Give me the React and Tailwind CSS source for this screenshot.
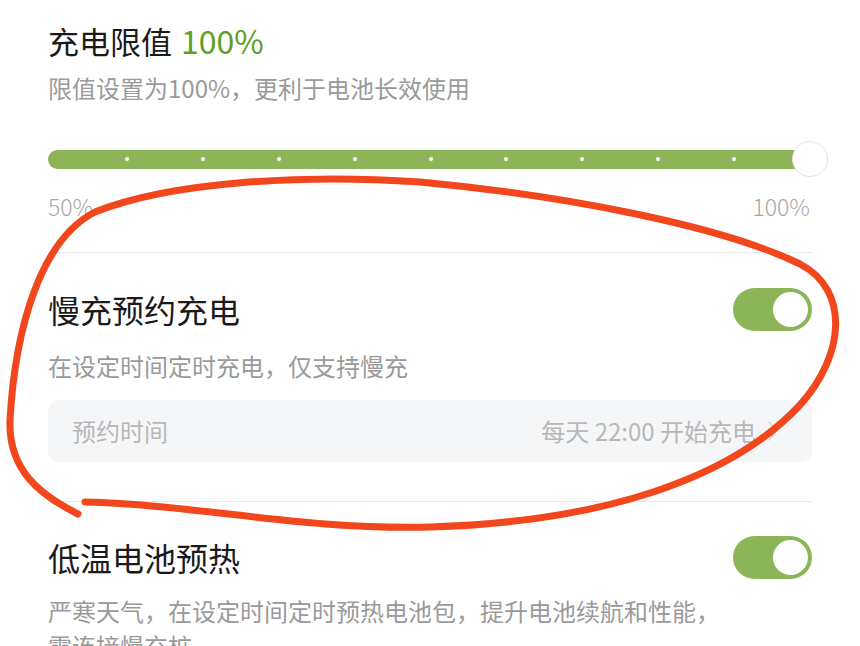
import React from "react";

const font = { fontFamily: '"Noto Sans CJK SC", "Noto Sans", sans-serif' };

const Toggle = () => (
  <div className="w-[79px] h-[43px] rounded-full bg-[#8bb557] flex items-center justify-end pr-[4px]">
    <div className="w-[35px] h-[35px] rounded-full bg-white" />
  </div>
);

const Chevron = () => (
  <svg width="14" height="24" viewBox="0 0 14 24" fill="none" className="ml-[10px]">
    <path d="M3 3 L11 12 L3 21" stroke="#d6d6d6" strokeWidth="1.6" strokeLinecap="round" strokeLinejoin="round" />
  </svg>
);

const ticks = [1, 2, 3, 4, 5, 6, 7, 8, 9];

export default function App() {
  return (
    <div className="relative w-[860px] h-[646px] overflow-hidden bg-white" style={font}>
      <div className="px-[48px]">
        {/* 充电限值 */}
        <div className="pt-[18px] h-[62px] flex items-center text-[31px] text-[#1a1a1a] leading-none">
          充电限值<span className="ml-[9px] text-[32px] text-[#5f9e24]">100%</span>
        </div>
        <div className="mt-[10px] h-[32px] flex items-center text-[24px] text-[#9a9a9a]">
          限值设置为100%，更利于电池长效使用
        </div>

        <div className="mt-[37px] h-[36px] relative flex items-center">
          <div className="w-full h-[19px] rounded-full bg-[#8bb557] flex items-center justify-between pl-[77px] pr-[76px]">
            {ticks.map((t) => (
              <div key={t} className="w-[4px] h-[4px] rounded-full bg-white" />
            ))}
          </div>
          <div className="absolute right-[-16px] top-0 w-[36px] h-[36px] rounded-full bg-white border border-[#e2e2e2]" />
        </div>

        <div className="mt-[14px] h-[30px] flex items-center justify-between text-[23px] font-light text-[#a8a8a8]">
          <span>50%</span>
          <span className="mr-[2px]">100%</span>
        </div>

        <div className="mt-[31px] h-px bg-[#e8e8e8]" />

        {/* 慢充预约充电 */}
        <div className="mt-[34px] h-[44px] flex items-center justify-between">
          <span className="text-[32px] text-[#1a1a1a]">慢充预约充电</span>
          <Toggle />
        </div>
        <div className="mt-[19px] h-[32px] flex items-center text-[24px] text-[#9a9a9a]">
          在设定时间定时充电，仅支持慢充
        </div>
        <div className="mt-[18px] h-[62px] rounded-[10px] bg-[#f5f6f8] flex items-center justify-between pl-[24px] pr-[32px] text-[24px] text-[#b8b8b8]">
          <span>预约时间</span>
          <span className="flex items-center">
            每天 22:00 开始充电
            <Chevron />
          </span>
        </div>

        <div className="mt-[39px] h-px bg-[#e8e8e8]" />

        {/* 低温电池预热 */}
        <div className="mt-[33px] h-[44px] flex items-center justify-between">
          <span className="text-[32px] text-[#1a1a1a]">低温电池预热</span>
          <Toggle />
        </div>
        <div className="mt-[14px] text-[24px] leading-[35px] text-[#9a9a9a]">
          严寒天气，在设定时间定时预热电池包，提升电池续航和性能，
          <br />
          需连接慢充桩
        </div>
      </div>

      {/* hand-drawn annotation */}
      <svg className="absolute inset-0 pointer-events-none" width="860" height="646" viewBox="0 0 860 646" fill="none">
        <path
          d="M85 502 C 200 505, 300 530, 430 527 C 600 522, 730 480, 800 405 C 845 355, 850 290, 800 264 C 720 225, 560 195, 420 182 C 300 174, 170 182, 95 212 C 40 240, 15 330, 10 420 C 8 470, 40 495, 78 514"
          stroke="#f2461d"
          strokeWidth="7"
          strokeLinecap="round"
          strokeLinejoin="round"
        />
      </svg>
    </div>
  );
}
